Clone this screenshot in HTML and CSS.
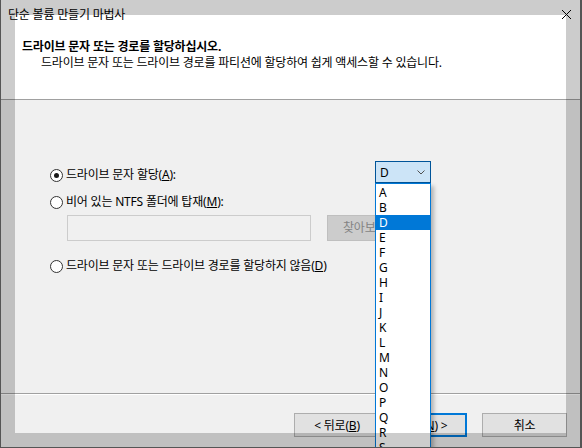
FILE: index.html
```html
<!DOCTYPE html>
<html lang="ko">
<head>
    <meta charset="UTF-8">
    <title>단순 볼륨 만들기 마법사</title>
    <link rel="stylesheet" href="styles.css">
</head>
<body>
    <div class="window">
        <div class="header">
            <div class="title">드라이브 문자 또는 경로를 할당하십시오.</div>
            <div class="subtitle">드라이브 문자 또는 드라이브 경로를 파티션에 할당하여 쉽게 액세스할 수 있습니다.</div>
        </div>
        <div class="content">
            <div class="options">
                <div class="row">
                    <div class="radio-label first"><span class="radio checked"></span><span>드라이브 문자 할당(<u>A</u>):</span></div>
                    <div class="combo">
                        <span>D</span>
                        <svg class="chevron" width="8" height="5" viewBox="0 0 8 5"><polyline points="0.5,0.5 4,4 7.5,0.5" fill="none" stroke="#505050" stroke-width="1"/></svg>
                        <ul class="droplist">
                            <li>A</li>
                            <li>B</li>
                            <li class="selected">D</li>
                            <li>E</li>
                            <li>F</li>
                            <li>G</li>
                            <li>H</li>
                            <li>I</li>
                            <li>J</li>
                            <li>K</li>
                            <li>L</li>
                            <li>M</li>
                            <li>N</li>
                            <li>O</li>
                            <li>P</li>
                            <li>Q</li>
                            <li>R</li>
                            <li>S</li>
                        </ul>
                    </div>
                </div>
                <div class="radio-label second"><span class="radio"></span><span>비어 있는 NTFS 폴더에 탑재(<u>M</u>):</span></div>
                <div class="folder-row">
                    <div class="textbox"></div>
                    <div class="browse">찾아보기(<u>R</u>)...</div>
                </div>
                <div class="radio-label third"><span class="radio"></span><span>드라이브 문자 또는 드라이브 경로를 할당하지 않음(<u>D</u>)</span></div>
            </div>
        </div>
        <div class="footer">
            <div class="btn back"><span>&lt; 뒤로(<u>B</u>)</span></div>
            <div class="btn next"><span>다음(<u>N</u>) &gt;</span></div>
            <div class="btn cancel"><span>취소</span></div>
        </div>
        <div class="frame">
            <div class="frame-inner"></div>
            <span class="caption">단순 볼륨 만들기 마법사</span>
            <svg class="close" width="9" height="9" viewBox="0 0 9 9"><path d="M0 0L9 9M9 0L0 9" stroke="#000" stroke-width="1"/></svg>
        </div>
    </div>
</body>
</html>
```

FILE: styles.css
```css
* {
    box-sizing: border-box;
}
body {
    margin: 0;
    font-family: "Noto Sans", "Noto Sans CJK KR", sans-serif;
    font-size: 12px;
    letter-spacing: -0.2px;
    color: #000;
}
.window {
    position: relative;
    width: 582px;
    height: 448px;
    overflow: hidden;
    background: #f0f0f0;
}
.header {
    height: 100px;
    background: #fff;
    border-bottom: 1px solid #a0a0a0;
    padding: 40px 0 0 22px;
}
.title {
    font-weight: bold;
    line-height: 14px;
}
.subtitle {
    line-height: 14px;
    margin-top: 2px;
    padding-left: 19px;
}
.content {
    height: 294px;
    border-bottom: 1px solid #a0a0a0;
    padding: 61px 0 0 50px;
}
.options {
    width: 381px;
}
.row {
    display: flex;
    justify-content: space-between;
    align-items: flex-start;
}
.radio-label {
    display: flex;
    align-items: center;
    gap: 3px;
    height: 14px;
    line-height: 14px;
    white-space: pre;
}
.radio-label.first {
    margin-top: 7px;
}
.radio-label.second {
    margin-top: 12px;
}
.radio-label.third {
    margin-top: 18px;
}
.radio {
    flex: none;
    width: 13px;
    height: 13px;
    border: 1px solid #333;
    border-radius: 50%;
    background: #fff;
    display: flex;
    align-items: center;
    justify-content: center;
}
.radio.checked::after {
    content: "";
    width: 5px;
    height: 5px;
    border-radius: 50%;
    background: #1a1a1a;
}
.combo {
    position: relative;
    width: 56px;
    height: 22px;
    background: #cce4f7;
    border: 1px solid #005499;
    display: flex;
    align-items: center;
    justify-content: space-between;
    padding: 0 5px 0 4px;
}
.droplist {
    position: absolute;
    top: 21px;
    left: -1px;
    width: 56px;
    height: 300px;
    margin: 0;
    padding: 1px 0 0 0;
    list-style: none;
    background: #fff;
    border: 1px solid #0078d7;
    box-shadow: 3px 3px 4px rgba(0, 0, 0, 0.25);
    z-index: 1;
}
.droplist li {
    height: 15px;
    line-height: 15px;
    padding-left: 3px;
    letter-spacing: 0;
}
.droplist li.selected {
    background: #0078d7;
    color: #fff;
}
.folder-row {
    display: flex;
    margin-top: 6px;
    padding-left: 17px;
}
.textbox {
    width: 244px;
    height: 26px;
    border: 1px solid #cccccc;
    background: #f0f0f0;
}
.browse {
    width: 100px;
    height: 26px;
    margin-left: 16px;
    padding-left: 15px;
    background: #cccccc;
    border: 1px solid #bfbfbf;
    color: #838383;
    line-height: 24px;
    white-space: nowrap;
}
.footer {
    display: flex;
    justify-content: flex-end;
    border-top: 1px solid #fff;
    padding: 18px 15px 0 0;
}
.btn {
    height: 24px;
    background: #e1e1e1;
    border: 1px solid #adadad;
    display: flex;
    align-items: center;
    justify-content: center;
    white-space: pre;
}
.btn.back {
    width: 86px;
}
.btn.next {
    width: 86px;
    margin-left: 1px;
    border: 2px solid #0078d7;
}
.btn.cancel {
    width: 85px;
    margin-left: 15px;
}
.frame {
    position: absolute;
    top: 0;
    left: 0;
    right: 0;
    bottom: 0;
    border-left: 1px solid #555;
    border-right: 2px solid #555;
    border-bottom: 1px solid #555;
    z-index: 2;
    pointer-events: none;
}
.frame-inner {
    height: 100%;
    border-style: solid;
    border-color: rgba(0, 0, 0, 0.2);
    border-width: 15px 14px 14px 14px;
}
.caption {
    position: absolute;
    left: 7px;
    top: 8px;
    line-height: 14px;
}
.close {
    position: absolute;
    left: 561px;
    top: 10px;
}
```
